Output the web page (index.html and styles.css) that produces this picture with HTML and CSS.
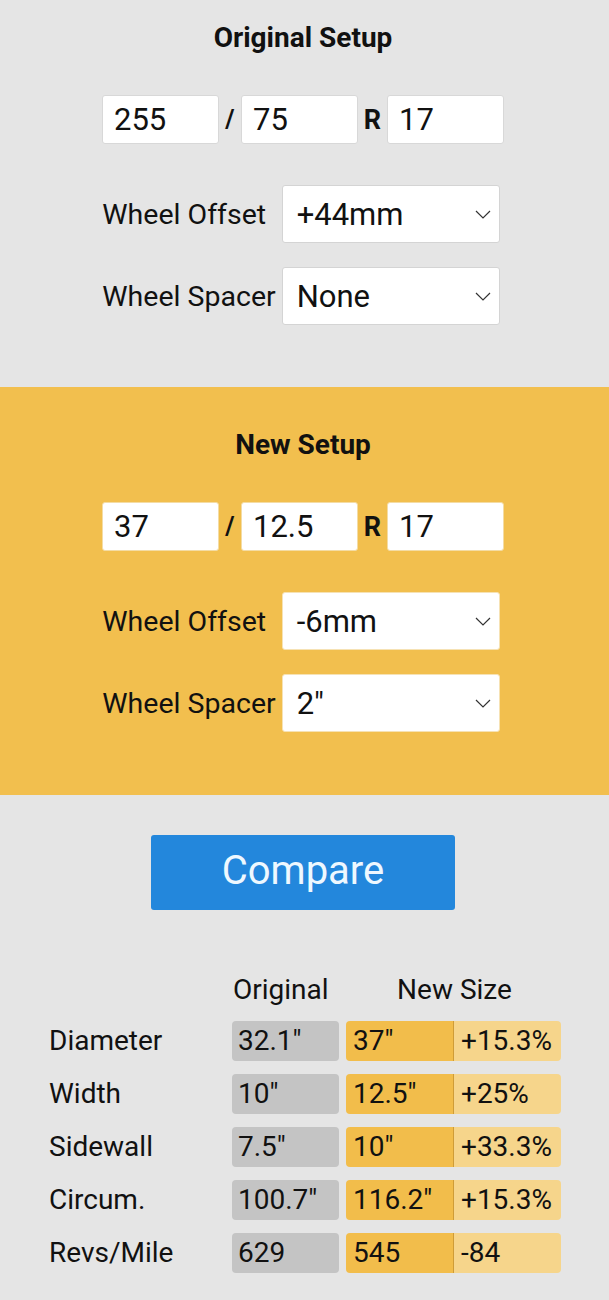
FILE: index.html
```html
<!DOCTYPE html>
<html lang="en">
<head>
  <meta charset="UTF-8">
  <meta name="viewport" content="width=device-width, initial-scale=1">
  <title>Tire Size Comparison</title>
  <link rel="stylesheet" href="styles.css">
</head>
<body>
  <!-- Original Setup -->
  <section class="setup setup-original">
    <div class="inner">
      <h2 class="setup-title">Original Setup</h2>
      <div class="tire-size">
        <input class="size-box" type="text" value="255">
        <span class="sep">/</span>
        <input class="size-box" type="text" value="75">
        <span class="sep sep-r">R</span>
        <input class="size-box" type="text" value="17">
      </div>
      <div class="fields">
        <span class="field-label">Wheel Offset</span>
        <div class="select">
          <span>+44mm</span>
          <svg class="chevron" width="16" height="9" viewBox="0 0 16 9"><path d="M1 1 L8 8 L15 1" fill="none" stroke="#333" stroke-width="1.2"/></svg>
        </div>
        <span class="field-label">Wheel Spacer</span>
        <div class="select">
          <span>None</span>
          <svg class="chevron" width="16" height="9" viewBox="0 0 16 9"><path d="M1 1 L8 8 L15 1" fill="none" stroke="#333" stroke-width="1.2"/></svg>
        </div>
      </div>
    </div>
  </section>

  <!-- New Setup -->
  <section class="setup setup-new">
    <div class="inner">
      <h2 class="setup-title">New Setup</h2>
      <div class="tire-size">
        <input class="size-box" type="text" value="37">
        <span class="sep">/</span>
        <input class="size-box" type="text" value="12.5">
        <span class="sep sep-r">R</span>
        <input class="size-box" type="text" value="17">
      </div>
      <div class="fields">
        <span class="field-label">Wheel Offset</span>
        <div class="select">
          <span>-6mm</span>
          <svg class="chevron" width="16" height="9" viewBox="0 0 16 9"><path d="M1 1 L8 8 L15 1" fill="none" stroke="#333" stroke-width="1.2"/></svg>
        </div>
        <span class="field-label">Wheel Spacer</span>
        <div class="select">
          <span>2"</span>
          <svg class="chevron" width="16" height="9" viewBox="0 0 16 9"><path d="M1 1 L8 8 L15 1" fill="none" stroke="#333" stroke-width="1.2"/></svg>
        </div>
      </div>
    </div>
  </section>

  <!-- Compare + Results -->
  <div class="inner">
    <button class="compare-btn">Compare</button>

    <div class="results">
      <span></span>
      <span class="head head-orig">Original</span>
      <span class="head head-new">New Size</span>

      <span class="row-label">Diameter</span>
      <span class="cell cell-orig">32.1"</span>
      <div class="cell-new"><span class="val">37"</span><span class="diff">+15.3%</span></div>

      <span class="row-label">Width</span>
      <span class="cell cell-orig">10"</span>
      <div class="cell-new"><span class="val">12.5"</span><span class="diff">+25%</span></div>

      <span class="row-label">Sidewall</span>
      <span class="cell cell-orig">7.5"</span>
      <div class="cell-new"><span class="val">10"</span><span class="diff">+33.3%</span></div>

      <span class="row-label">Circum.</span>
      <span class="cell cell-orig">100.7"</span>
      <div class="cell-new"><span class="val">116.2"</span><span class="diff">+15.3%</span></div>

      <span class="row-label">Revs/Mile</span>
      <span class="cell cell-orig">629</span>
      <div class="cell-new"><span class="val">545</span><span class="diff">-84</span></div>
    </div>
  </div>
</body>
</html>
```

FILE: styles.css
```css
/* Global */
*, *::before, *::after {
  margin: 0;
  padding: 0;
  box-sizing: border-box;
}
body {
  font-family: Roboto, "Liberation Sans", sans-serif;
  background: #e5e5e5;
  color: #111;
  min-height: 1300px;
}
.inner {
  width: 606px;
}
/* Setup sections */
.setup-original {
  padding: 21px 0 62px;
}
.setup-new {
  background: #f2bf4e;
  padding: 41px 0 63px;
}
.setup-title {
  font-size: 28px;
  font-weight: 700;
  line-height: 34px;
  text-align: center;
  margin-bottom: 40px;
}
/* Tire size row */
.tire-size {
  display: flex;
  justify-content: center;
  align-items: center;
}
.size-box {
  width: 117px;
  height: 49px;
  border: 1px solid #d8d8d8;
  border-radius: 3px;
  background: #fff;
  font-family: inherit;
  font-size: 31px;
  color: #111;
  padding: 0 11px;
  outline: none;
}
.setup-new .size-box {
  border-color: #f4dca4;
}
.sep {
  width: 22px;
  text-align: center;
  font-size: 25px;
  font-weight: 700;
}
.sep-r {
  width: 29px;
  font-size: 27px;
}
/* Wheel fields */
.fields {
  display: grid;
  grid-template-columns: auto 218px;
  column-gap: 6px;
  row-gap: 24px;
  align-items: center;
  justify-content: center;
  margin-top: 41px;
  padding-right: 4px;
}
.field-label {
  font-size: 28.5px;
}
.select {
  height: 58px;
  background: #fff;
  border: 1px solid #d4d4d4;
  border-radius: 3px;
  display: flex;
  align-items: center;
  justify-content: space-between;
  padding: 0 8px 0 14px;
  font-size: 31px;
}
.setup-new .select {
  border-color: #f6e2b4;
}
.chevron {
  display: block;
}
/* Compare button */
.compare-btn {
  display: block;
  width: 304px;
  height: 75px;
  margin: 40px auto 0;
  background: #2387dc;
  color: #eef8ff;
  border: none;
  border-radius: 3px;
  font-family: inherit;
  font-size: 40px;
  padding-bottom: 5px;
  cursor: pointer;
}
/* Results table */
.results {
  display: grid;
  grid-template-columns: 176px 107px 215px;
  column-gap: 7px;
  row-gap: 13px;
  margin: 61px 0 0 49px;
  font-size: 28px;
  line-height: 40px;
}
.head {
  line-height: 37px;
}
.head-orig {
  padding-left: 1px;
}
.head-new {
  text-align: center;
  padding-left: 2px;
}
.cell {
  border-radius: 4px;
  padding-left: 6px;
}
.cell-orig {
  background: #c4c4c4;
}
.cell-new {
  display: flex;
  border-radius: 4px;
  overflow: hidden;
}
.cell-new .val {
  width: 108px;
  background: #f2bd4b;
  border-right: 1px solid #cf9c37;
  padding-left: 7px;
}
.cell-new .diff {
  flex: 1;
  background: #f6d58b;
  padding-left: 7px;
}
```
